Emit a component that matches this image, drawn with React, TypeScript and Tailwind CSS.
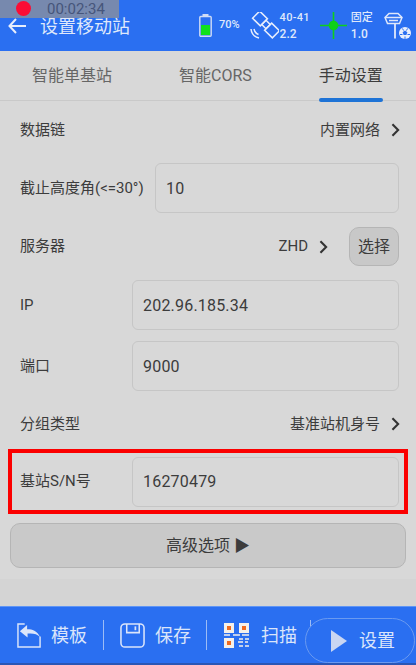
const font = "font-['Roboto','Noto_Sans_CJK_SC',sans-serif]"

function Chevron({ className = "" }: { className?: string }) {
  return (
    <svg viewBox="0 0 10 16" className={`w-[9px] h-[14px] ${className}`} fill="none" stroke="#333" strokeWidth="2.4">
      <path d="M1.5 1.5 8 8l-6.500 6.500" />
    </svg>
  )
}

function SelectRow({ label, value, className = "h-[58px]" }: { label: string; value: string; className?: string }) {
  return (
    <div className={`pl-5 pr-[16px] flex items-center justify-between text-[15px] text-[#3c3c3c] ${className}`}>
      <span>{label}</span>
      <span className="flex items-center gap-[11px]">
        {value}
        <Chevron />
      </span>
    </div>
  )
}

function InputRow({ label, value, labelWidth = "w-[112px]" }: { label: string; value: string; labelWidth?: string }) {
  return (
    <div className="h-[50px] shrink-0 pl-5 pr-[17px] flex items-center text-[15px] text-[#3c3c3c]">
      <span className={`${labelWidth} shrink-0 whitespace-nowrap`}>{label}</span>
      <div className="flex-1 h-full rounded-md border border-[#c6c6c6] flex items-center pl-[10px] pt-[1px] text-[16px] tracking-[0.2px]">
        {value}
      </div>
    </div>
  )
}

function BatteryIcon() {
  return (
    <svg viewBox="0 0 13 23" className="w-[13px] h-[23px]">
      <rect x="3.500" y="0" width="6" height="2.500" fill="#cfdcf6" />
      <rect x="0.800" y="2.500" width="11.400" height="19.700" rx="1" fill="none" stroke="#cfdcf6" strokeWidth="1.400" />
      <rect x="2" y="11" width="9" height="10" fill="#10e01c" />
    </svg>
  )
}

function SatelliteIcon() {
  return (
    <svg viewBox="0 0 29 27" className="w-[29px] h-[27px]" fill="none" stroke="#e8eefc" strokeWidth="1.500">
      <g transform="translate(16 12.500) rotate(45)">
        <rect x="-14" y="-5" width="11" height="10" />
        <rect x="-3" y="-3" width="6" height="6" />
        <rect x="3" y="-5" width="11" height="10" />
      </g>
      <path d="M1 17c.5 4.500 3.500 8 8 9M4 17c.5 2.500 2 4.500 4.500 5.500" />
    </svg>
  )
}

function GreenCross() {
  return (
    <svg viewBox="0 0 27 27" className="w-[27px] h-[27px]">
      <path d="M13.500 0v27M0 13.500h27" stroke="#0fd01a" strokeWidth="1.600" />
      <circle cx="13.500" cy="13.500" r="4.800" fill="#0fd01a" />
    </svg>
  )
}

function RoverIcon() {
  return (
    <svg viewBox="0 0 29 27" className="w-[29px] h-[27px]" fill="none" stroke="#dfe8fb" strokeWidth="1.500">
      <path d="M1 5.500 5 1.500h9l4 4-2.500 6h-12z" />
      <path d="M1 5.500h17M5 8.500h9" />
      <path d="M11 11.500v15" strokeWidth="1.800" />
      <circle cx="21" cy="21" r="6" fill="#e8eefc" stroke="none" />
      <path d="m21 18.500 2.400 1.800-1 2.700h-2.800l-1-2.700z" fill="#2a6ff1" stroke="none" />
      <path d="M18.500 16.500l1 2M23.500 16.500l-1 2M16 22.500l2.500 0M26 22.500l-2.500 0M21 24.500v2.500" stroke="#2a6ff1" strokeWidth="1" />
    </svg>
  )
}

function TemplateIcon() {
  return (
    <svg viewBox="0 0 28 26" className="w-[27px] h-[25px]" fill="none" stroke="#dbe5fa" strokeWidth="1.500">
      <path d="M9 1H2v24h23V14" />
      <path d="M11.500 2v4.500H12c5 0 9.500 1.500 13 8-3-3-7-4-13-3.500v4L4 8.500z" fill="#dbe5fa" stroke="none" />
    </svg>
  )
}

function SaveIcon() {
  return (
    <svg viewBox="0 0 26 26" className="w-[25px] h-[25px]" fill="none" stroke="#dbe5fa" strokeWidth="1.600">
      <rect x="1" y="1" width="24" height="24" rx="4" />
      <path d="M7 1v9h13V1" />
      <path d="M16 3.500v4" strokeWidth="1.800" />
    </svg>
  )
}

function QrIcon() {
  return (
    <svg viewBox="0 0 25 25" className="w-[25px] h-[25px]">
      <rect width="10" height="10" fill="#f4f0ea" />
      <rect x="3" y="3" width="4" height="4" fill="#ef6a1f" />
      <rect x="15" width="10" height="10" fill="#f4f0ea" />
      <rect x="18" y="3" width="4" height="4" fill="#ef6a1f" />
      <rect y="15" width="10" height="10" fill="#f4f0ea" />
      <rect x="3" y="18" width="4" height="4" fill="#ef6a1f" />
      <path d="M0 12h6M9 12h7M18 12h7M15 16h4M21 16h4M14 19h5M21 19h3M15 23h4M21 23h4" stroke="#f4f0ea" strokeWidth="1.600" />
    </svg>
  )
}

export default function App() {
  return (
    <div className={`relative w-[416px] h-[665px] overflow-hidden flex flex-col bg-[#d8d8d8] ${font}`}>
      {/* screen recorder overlay */}
      <div className="absolute left-0 top-0 z-10 w-[119px] h-[18px] bg-[#7f8ca6]/90 text-[15px] leading-[18px] text-[#46557a] pl-[47px]">
        00:02:34
      </div>
      <div className="absolute left-[16px] top-[1px] z-20 w-[15px] h-[15px] rounded-full bg-[#fb0d35]" />

      {/* Header */}
      <header className="h-[51px] shrink-0 bg-[#2a6ff1] flex items-center text-[#dfe8fb]">
        <svg viewBox="0 0 18 16" className="ml-[8px] mt-[1px] w-[18px] h-[16px]" fill="none" stroke="#e8eefc" strokeWidth="2">
          <path d="M8 1 1.500 8 8 15M2 8h16" />
        </svg>
        <span className="ml-[14px] mt-[2px] w-[159px] shrink-0 text-[18px] leading-[16px] whitespace-nowrap">设置移动站</span>
        <BatteryIcon />
        <span className="ml-[7px] text-[11px] font-medium">70%</span>
        <div className="ml-[10px]"><SatelliteIcon /></div>
        <div className="ml-[1px] text-[11px] leading-[16px] font-medium">
          <div className="tracking-[0.3px]">40-41</div>
          <div className="text-[12px]">2.2</div>
        </div>
        <div className="ml-[10px]"><GreenCross /></div>
        <div className="ml-[4px] text-[11px] leading-[16px] font-medium">
          <div>固定</div>
          <div className="text-[12px]">1.0</div>
        </div>
        <div className="ml-[11px]"><RoverIcon /></div>
      </header>

      {/* Tabs */}
      <nav className="h-[50px] shrink-0 flex items-center border-b border-[#c9c9c9] text-[16px] text-[#666]">
        <span className="ml-[32px]">智能单基站</span>
        <span className="ml-[67px]">智能CORS</span>
        <span className="relative ml-[67px] h-full flex items-center text-[#3c3c3c]">
          手动设置
          <span className="absolute left-0 right-0 bottom-[-2px] h-[4px] rounded-full bg-[#1e73d6]" />
        </span>
      </nav>

      {/* Form */}
      <main className="flex-1 flex flex-col">
        <SelectRow label="数据链" value="内置网络" className="h-[58px] mb-[4px]" />
        <InputRow label="截止高度角(<=30°)" value="10" labelWidth="w-[135px]" />
        <div className="h-[67px] shrink-0 pl-5 pr-[17px] flex items-center justify-between text-[15px] text-[#3c3c3c]">
          <span>服务器</span>
          <span className="flex items-center">
            ZHD
            <Chevron className="ml-[11px]" />
            <button className="ml-[21px] w-[50px] h-[39px] rounded-[10px] border border-[#b5b5b5] bg-[#c8c8c8] text-[16px]">选择</button>
          </span>
        </div>
        <InputRow label="IP" value="202.96.185.34" />
        <div className="h-[11px] shrink-0" />
        <InputRow label="端口" value="9000" />
        <SelectRow label="分组类型" value="基准站机身号" className="h-[66px] shrink-0" />
        <div className="mx-[8px] h-[65px] shrink-0 border-[4px] border-[#fb0000] flex items-center text-[15px] text-[#3c3c3c] -mt-[8px]">
          <span className="ml-[8px] w-[112px] shrink-0">基站S/N号</span>
          <div className="flex-1 h-[50px] mr-[5px] rounded-md border border-[#c6c6c6] flex items-center pl-[10px] pt-[1px] text-[16px] tracking-[0.2px]">16270479</div>
        </div>
        <button className="mx-[10px] mt-[9px] h-[45px] shrink-0 rounded-[10px] border border-[#b5b5b5] bg-[#c9c9c9] text-[16px] text-[#3c3c3c]">
          高级选项 ▶
        </button>
        <div className="mt-[11px] flex-1 bg-[#d4d4d4]" />
      </main>

      {/* Bottom bar */}
      <footer className="relative h-[59px] shrink-0 bg-[#2a6ff1] border-t border-[#5f95f5] border-b-2 border-b-[#2a56b5] flex items-center text-[18px] text-[#dbe5fa]">
        <div className="ml-[16px]"><TemplateIcon /></div>
        <span className="ml-[8px]">模板</span>
        <div className="ml-[16px] w-[1px] h-[30px] bg-[#9dbcf5]" />
        <div className="ml-[16px]"><SaveIcon /></div>
        <span className="ml-[10px]">保存</span>
        <div className="ml-[15px] w-[1px] h-[30px] bg-[#9dbcf5]" />
        <div className="ml-[17px]"><QrIcon /></div>
        <span className="ml-[12px]">扫描</span>
        <div className="ml-[13px] w-[1px] h-[30px] bg-[#9dbcf5]" />
        <div className="absolute left-[305px] top-[11px] w-[110px] h-[45px] rounded-full border border-[#6a9af0] bg-[#2a6ff1] flex items-center">
          <svg viewBox="0 0 16 22" className="ml-[25px] w-[16px] h-[22px]">
            <path d="M0 0 16 11 0 22z" fill="#c9d6f2" />
          </svg>
          <span className="ml-[12px]">设置</span>
        </div>
      </footer>
    </div>
  )
}
